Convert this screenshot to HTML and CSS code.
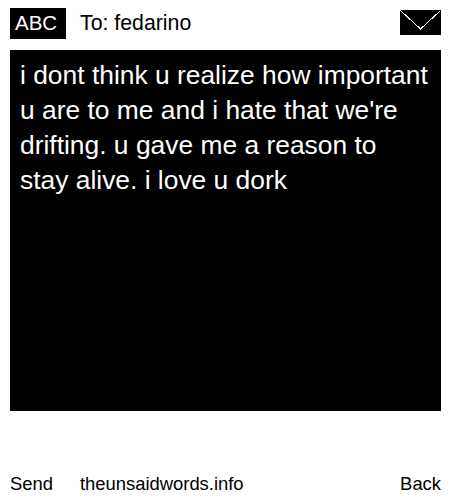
FILE: index.html
```
<!DOCTYPE html>
<html lang="en">
<head>
<meta charset="utf-8">
<title>To: fedarino</title>
<link rel="stylesheet" href="styles.css">
</head>
<body>
<div class="phone">
  <header class="top">
    <span class="mode">ABC</span>
    <span class="to">To: fedarino</span>
    <svg class="env" width="41" height="25" viewBox="0 0 41 25" aria-hidden="true">
      <rect width="41" height="25" fill="#000"/>
      <path d="M0.5 0.5 L20.5 19 L40.5 0.5" fill="none" stroke="#fff" stroke-width="1" shape-rendering="crispEdges"/>
    </svg>
  </header>
  <main class="msg">i dont think u realize how important u are to me and i hate that we're drifting. u gave me a reason to stay alive. i love u dork</main>
  <footer class="bottom">
    <span class="send">Send</span>
    <span class="site">theunsaidwords.info</span>
    <span class="back">Back</span>
  </footer>
</div>
</body>
</html>
```
FILE: styles.css
```
html, body { margin: 0; padding: 0; background: #fff; }
.phone {
  width: 450px; height: 500px; box-sizing: border-box;
  padding: 8px 9px 0 10px;
  display: flex; flex-direction: column;
  font-family: "Liberation Sans", Arial, sans-serif; color: #000;
}
.top { display: flex; align-items: center; height: 31px; }
.mode { background: #000; color: #fff; width: 56px; height: 31px; box-sizing: border-box; padding-left: 5px; font-size: 20.5px; line-height: 29px; }
.to { margin-left: 14px; flex: 1; font-size: 21.3px; line-height: 30px; padding-bottom: 1px; }
.env { display: block; margin-top: -2px; }
.msg {
  margin-top: 11px; height: 361px; box-sizing: border-box;
  background: #000; color: #fff;
  padding: 8px 10px; font-size: 26.4px; line-height: 35px;
}
.bottom { display: flex; margin-top: 61px; font-size: 18.4px; line-height: 23px; }
.send { width: 70px; }
.site { flex: 1; }
```
